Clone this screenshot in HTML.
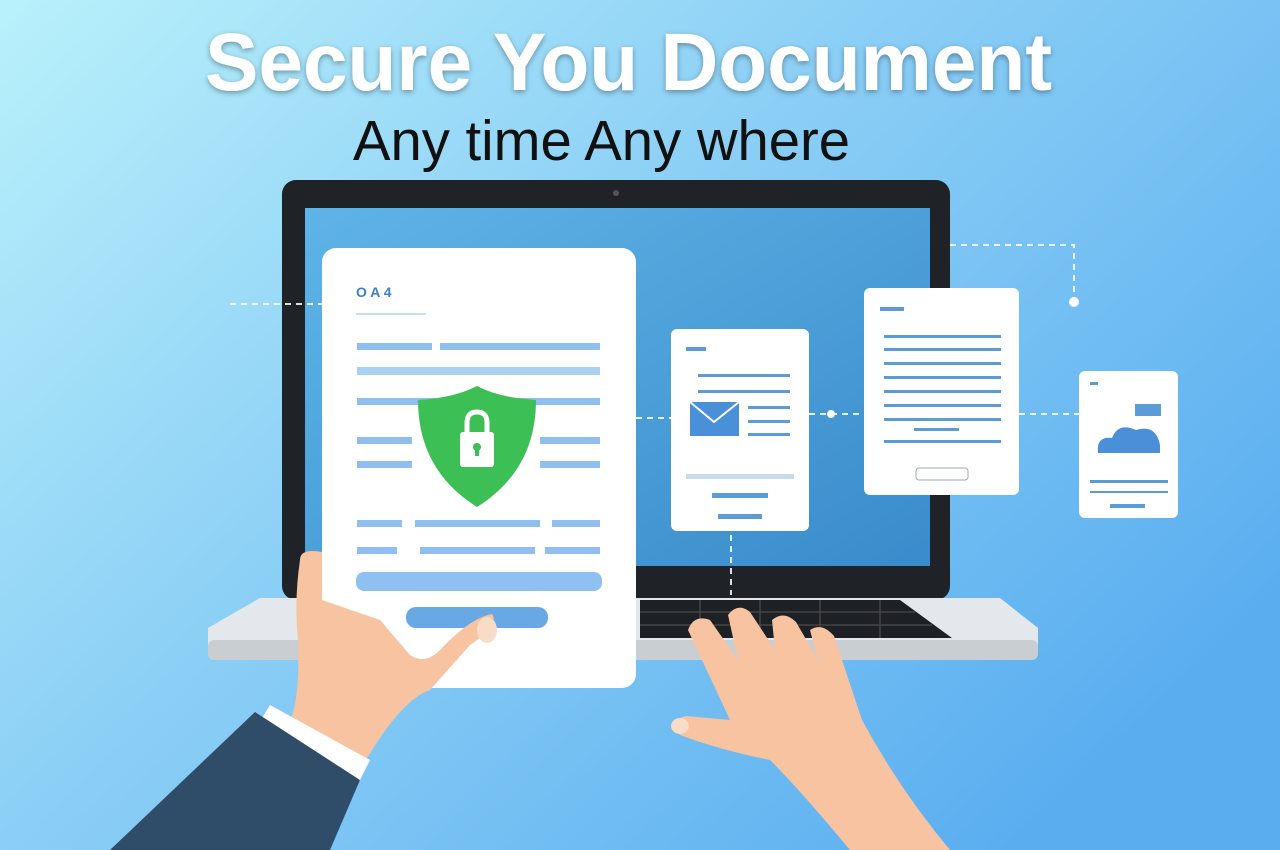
<!DOCTYPE html>
<html><head><style>html,body{margin:0;padding:0;width:1280px;height:850px;overflow:hidden}</style></head>
<body>
<svg width="1280" height="850" viewBox="0 0 1280 850" xmlns="http://www.w3.org/2000/svg">
<defs>
<linearGradient id="bg" x1="0" y1="0" x2="1" y2="0.7">
<stop offset="0" stop-color="#b9f1fb"/><stop offset="0.45" stop-color="#8dd0f6"/><stop offset="1" stop-color="#5aaef0"/>
</linearGradient>
<linearGradient id="scr" x1="0" y1="0" x2="1" y2="1">
<stop offset="0" stop-color="#5fb4e6"/><stop offset="1" stop-color="#3a8bcb"/>
</linearGradient>
<filter id="sh"><feDropShadow dx="0" dy="2" stdDeviation="3" flood-color="#000" flood-opacity="0.35"/></filter>
</defs>
<rect width="1280" height="850" fill="url(#bg)"/>
<text x="205" y="90" font-family="Liberation Sans, sans-serif" font-size="82" font-weight="bold" fill="#fff" textLength="847" lengthAdjust="spacingAndGlyphs" filter="url(#sh)">Secure You Document</text>
<text x="353" y="160" font-family="Liberation Sans, sans-serif" font-size="57" fill="#111" textLength="497" lengthAdjust="spacingAndGlyphs">Any time Any where</text>
<!-- laptop -->
<rect x="282" y="180" width="668" height="420" rx="14" fill="#1f2226"/>
<rect x="305" y="208" width="625" height="358" fill="url(#scr)"/>
<circle cx="616" cy="193" r="3" fill="#555"/>
<path d="M208 628 L260 598 L1000 598 L1038 628 L1038 652 Q1038 660 1028 660 L218 660 Q208 660 208 652Z" fill="#e4e8ec"/>
<rect x="208" y="640" width="830" height="20" rx="6" fill="#c9ced3"/>
<path d="M640 600 L900 600 L952 638 L640 638Z" fill="#1d2125"/>
<g stroke="#444" stroke-width="1.5">
<line x1="640" y1="612" x2="915" y2="612"/><line x1="640" y1="625" x2="932" y2="625"/>
<line x1="700" y1="600" x2="700" y2="638"/><line x1="760" y1="600" x2="760" y2="638"/><line x1="820" y1="600" x2="820" y2="638"/><line x1="880" y1="600" x2="880" y2="638"/>
</g>
<!-- connectors -->
<g stroke="#fff" stroke-width="2" stroke-dasharray="6 5" fill="none" opacity="0.85">
<path d="M230 304 L322 304"/><path d="M636 418 L671 418"/><path d="M809 414 L864 414"/><path d="M1019 414 L1079 414"/>
<path d="M950 245 L1074 245 L1074 300"/><path d="M731 535 L731 595"/>
</g>
<circle cx="1074" cy="302" r="5" fill="#fff"/><circle cx="831" cy="414" r="4" fill="#fff"/>
<!-- doc 2 -->
<rect x="671" y="329" width="138" height="202" rx="6" fill="#fff"/>
<g fill="#5b9bd8"><rect x="686" y="347" width="20" height="4"/><rect x="698" y="374" width="92" height="3"/><rect x="698" y="390" width="92" height="3"/><rect x="748" y="406" width="42" height="3"/><rect x="748" y="420" width="42" height="3"/><rect x="748" y="433" width="42" height="3"/><rect x="686" y="474" width="108" height="5" fill="#c9dcef"/><rect x="712" y="493" width="56" height="5"/><rect x="718" y="514" width="44" height="5"/></g>
<rect x="690" y="402" width="49" height="34" fill="#4a90d9"/><path d="M690 402 L714 422 L739 402" stroke="#fff" stroke-width="2" fill="none"/>
<!-- doc 3 -->
<rect x="864" y="288" width="155" height="207" rx="6" fill="#fff"/>
<g fill="#5b9bd8"><rect x="880" y="307" width="24" height="4"/><rect x="884" y="335" width="117" height="3"/><rect x="884" y="348" width="117" height="3"/><rect x="884" y="362" width="117" height="3"/><rect x="884" y="376" width="117" height="3"/><rect x="884" y="390" width="117" height="3"/><rect x="884" y="404" width="117" height="3"/><rect x="884" y="418" width="117" height="3"/><rect x="914" y="428" width="45" height="3"/><rect x="884" y="440" width="117" height="3"/><rect x="916" y="468" width="52" height="12" rx="3" fill="none" stroke="#9ab" /></g>
<!-- doc 4 -->
<rect x="1079" y="371" width="99" height="147" rx="6" fill="#fff"/>
<g fill="#5b9bd8"><rect x="1090" y="382" width="8" height="3"/><rect x="1135" y="404" width="26" height="12"/><rect x="1090" y="480" width="78" height="3"/><rect x="1090" y="491" width="78" height="2"/><rect x="1110" y="504" width="35" height="4"/></g>
<path d="M1098 453 Q1096 436 1112 438 Q1118 422 1136 430 Q1156 424 1160 445 L1160 453Z" fill="#4a90d9"/>
<!-- big doc -->
<rect x="322" y="248" width="314" height="440" rx="14" fill="#fff"/>
<text x="356" y="297" font-family="Liberation Sans, sans-serif" font-size="14" font-weight="bold" fill="#3d7fc6">O A 4</text>
<rect x="356" y="313" width="70" height="2" fill="#cde"/>
<g fill="#8fbef0">
<rect x="357" y="343" width="75" height="7"/><rect x="440" y="343" width="160" height="7"/>
<rect x="357" y="367" width="243" height="8" fill="#a9cff2"/>
<rect x="357" y="398" width="243" height="7"/>
<rect x="357" y="437" width="55" height="7"/><rect x="540" y="437" width="60" height="7"/>
<rect x="357" y="461" width="55" height="7"/><rect x="540" y="461" width="60" height="7"/>
<rect x="357" y="520" width="45" height="7"/><rect x="415" y="520" width="125" height="7"/><rect x="552" y="520" width="48" height="7"/>
<rect x="357" y="547" width="40" height="7"/><rect x="420" y="547" width="115" height="7"/><rect x="545" y="547" width="55" height="7"/>
<rect x="356" y="572" width="246" height="19" rx="8" fill="#8ec0f2"/>
<rect x="406" y="607" width="142" height="21" rx="10" fill="#68a8e4"/>
</g>
<path d="M477 386 Q500 398 536 400 Q536 470 477 507 Q418 470 418 400 Q454 398 477 386Z" fill="#3cbf55"/>
<rect x="460" y="432" width="34" height="35" rx="3" fill="#fff"/>
<path d="M467 432 V423 Q467 412 477 412 Q487 412 487 423 V432" stroke="#fff" stroke-width="5" fill="none"/>
<circle cx="477" cy="447" r="4" fill="#3cbf55"/><rect x="475" y="447" width="4" height="9" fill="#3cbf55"/>
<!-- left hand -->
<path d="M300 560 Q294 600 298 640 Q300 700 290 720 L360 770 Q400 700 430 690 L470 645 Q500 625 492 614 Q470 618 440 650 Q425 665 410 655 L380 620 L322 600 L322 552 Q300 548 300 560Z" fill="#f7c3a1"/>
<ellipse cx="487" cy="630" rx="10" ry="13" fill="#f9dcc7"/>
<path d="M270 705 L370 760 L355 790 L255 730Z" fill="#fff"/>
<path d="M255 712 L360 780 L330 850 L110 850 Z" fill="#2f4d69"/>
<!-- right hand -->
<path d="M688 630 Q694 614 710 620 L738 660 L728 615 Q738 602 750 612 L775 650 L772 620 Q784 610 796 622 L818 660 L810 630 Q822 622 834 636 L862 720 Q900 790 950 850 L850 850 Q800 790 770 760 Q720 750 680 735 Q666 722 686 716 L730 720Z" fill="#f7c3a1"/>
<ellipse cx="680" cy="726" rx="9" ry="8" fill="#f9dcc7"/>
</svg>
</body></html>
